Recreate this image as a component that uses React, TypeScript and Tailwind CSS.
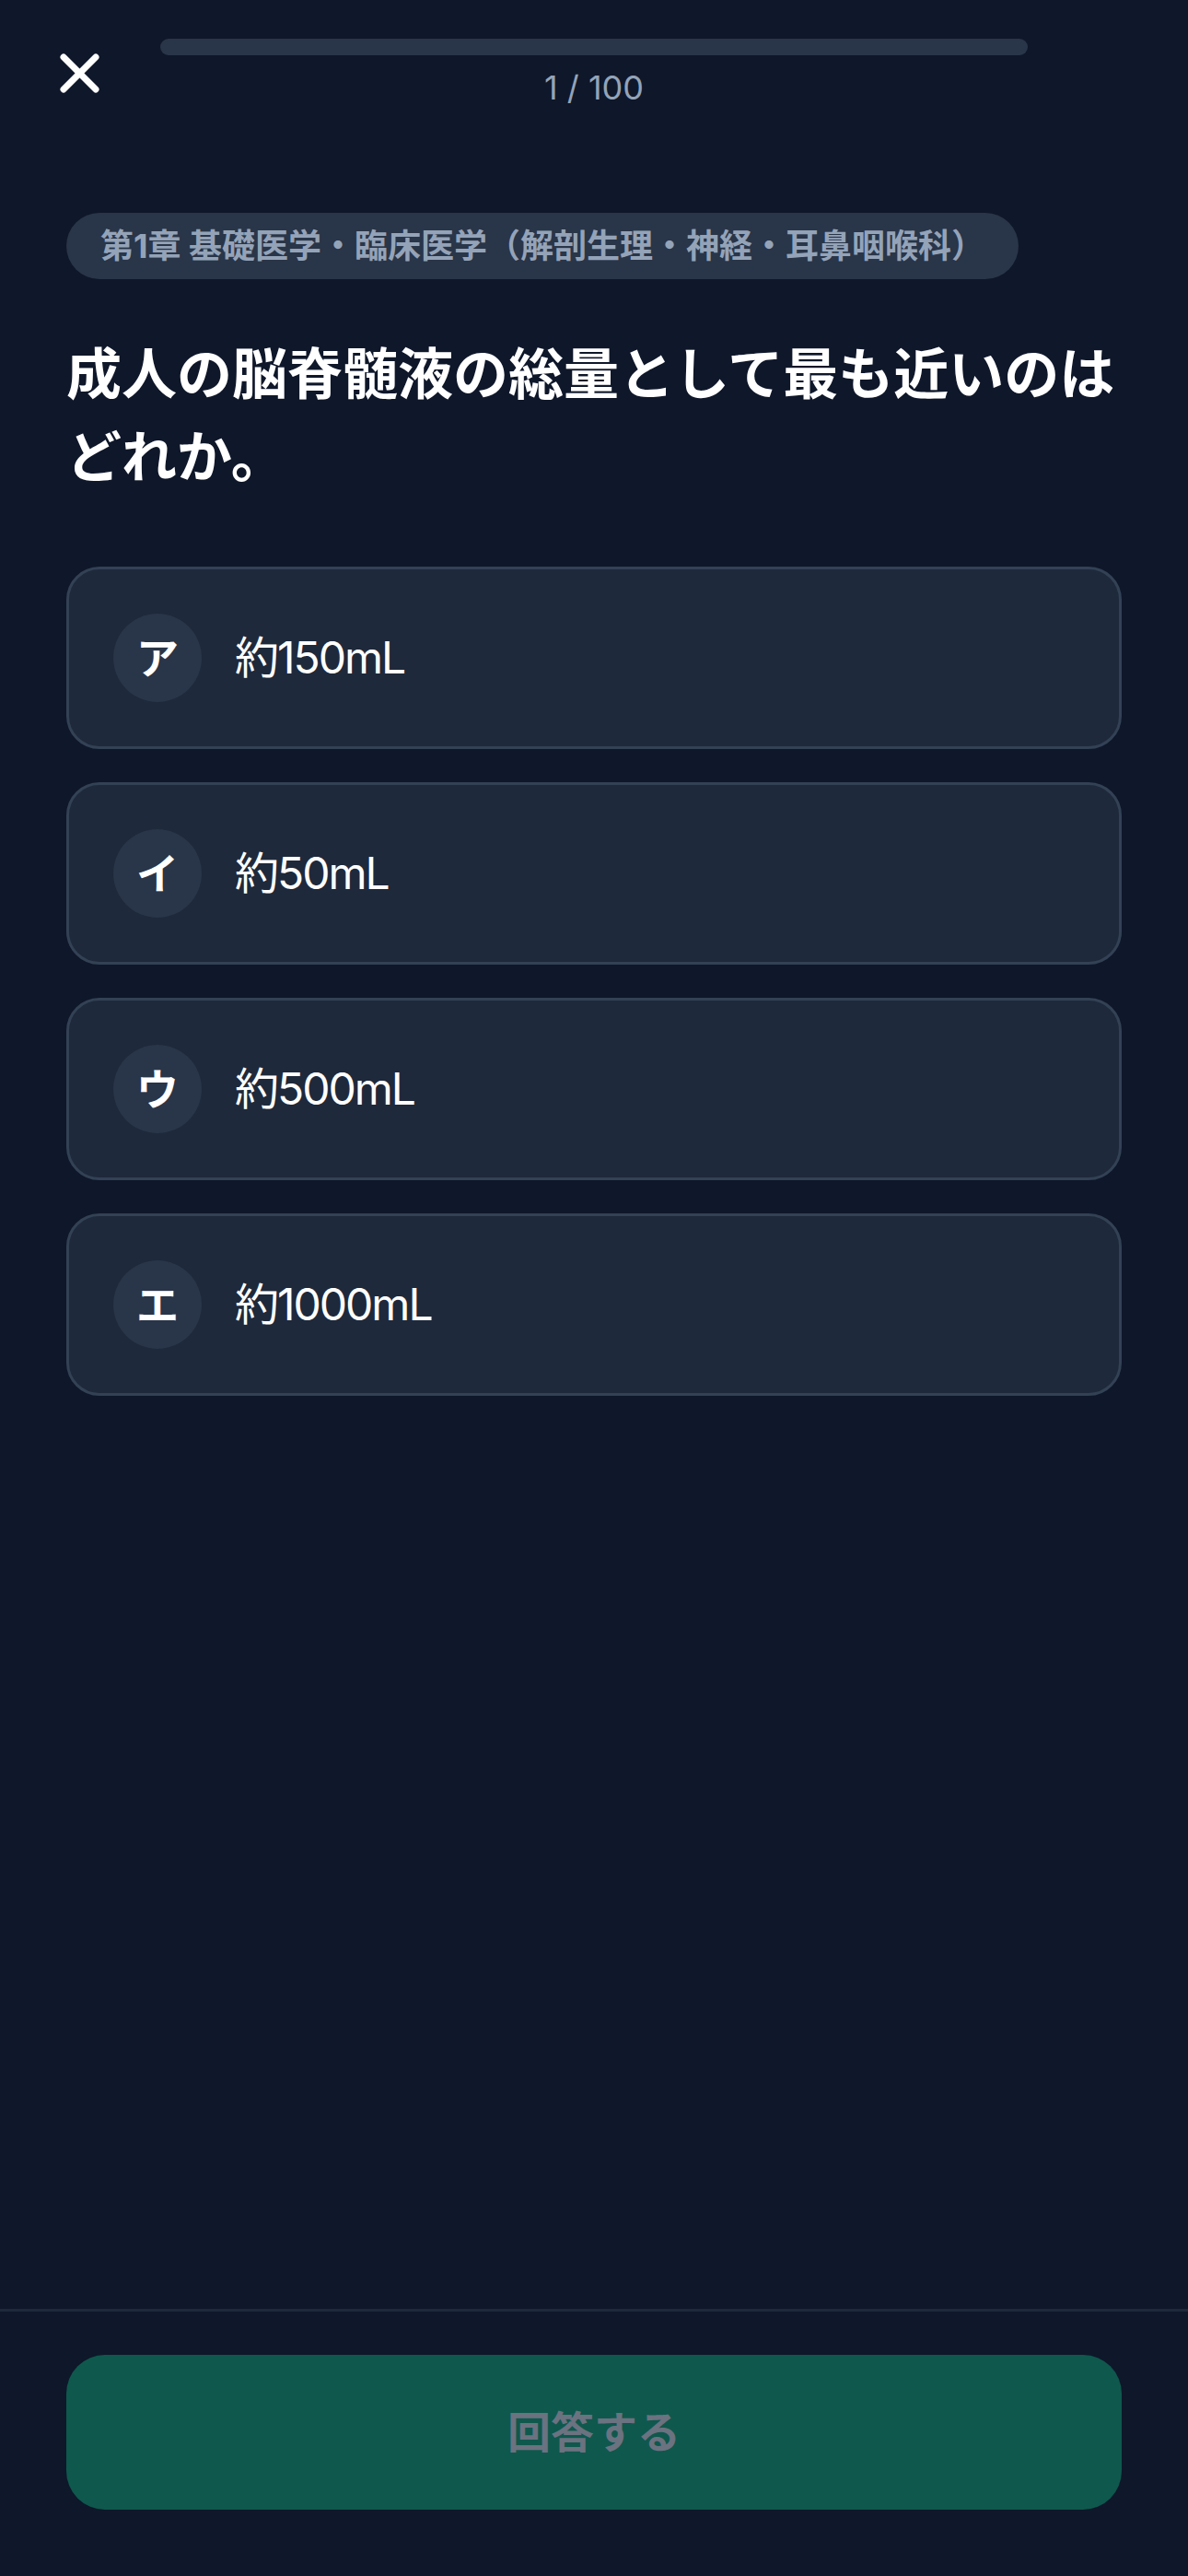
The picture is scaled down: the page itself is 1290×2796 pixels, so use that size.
import React from "react";

const options = [
  { key: "ア", text: "約150mL" },
  { key: "イ", text: "約50mL" },
  { key: "ウ", text: "約500mL" },
  { key: "エ", text: "約1000mL" },
];

export default function App() {
  return (
    <div
      className="flex min-h-[2796px] w-full flex-col bg-[#0f172a] text-white"
      style={{ fontFamily: '"Inter", "Noto Sans CJK JP", sans-serif' }}
    >
      <div className="flex-1">
        {/* Header */}
        <div className="flex items-start pl-[64px] pr-[174px] pt-[42px]">
          <svg
            className="mt-[15px] h-[45px] w-[45px] shrink-0"
            viewBox="0 0 45 45"
            fill="none"
            stroke="white"
            strokeWidth="7"
            strokeLinecap="round"
          >
            <line x1="5" y1="5" x2="40" y2="40" />
            <line x1="40" y1="5" x2="5" y2="40" />
          </svg>
          <div className="ml-[65px] flex flex-1 flex-col items-center">
            <div className="h-[18px] w-full rounded-full bg-[#293548]" />
            <div className="mt-[8px] text-[36px] leading-[54px] text-[#94a3b8]">1 / 100</div>
          </div>
        </div>

        <div className="px-[72px]">
          <div className="mt-[109px] inline-flex h-[72px] items-center rounded-full bg-[#293548] px-[37px] text-[36px] font-bold text-[#94a3b8]">
            第1章 基礎医学・臨床医学（解剖生理・神経・耳鼻咽喉科）
          </div>

          <h1 className="mt-[58px] text-[60px] font-bold leading-[90px] text-white">
            成人の脳脊髄液の総量として最も近いのはどれか。
          </h1>

          <div className="mt-[74px] flex flex-col gap-[36px]">
            {options.map((o) => (
              <div
                key={o.key}
                className="flex h-[198px] items-center rounded-[36px] border-[3px] border-[#334155] bg-[#1e293b] px-[48px]"
              >
                <div className="flex h-[96px] w-[96px] shrink-0 items-center justify-center rounded-full bg-[#293548] text-[46px] font-bold text-white">
                  {o.key}
                </div>
                <div className="ml-[36px] text-[48px] tracking-[-2px] text-white">{o.text}</div>
              </div>
            ))}
          </div>
        </div>
      </div>

      {/* Footer */}
      <div className="border-t-[3px] border-[#1e293b] px-[72px] pb-[72px] pt-[47px]">
        <div className="flex h-[168px] items-center justify-center rounded-[42px] bg-[#0f584d] text-[47px] font-bold text-[#6b7280]">
          回答する
        </div>
      </div>
    </div>
  );
}
